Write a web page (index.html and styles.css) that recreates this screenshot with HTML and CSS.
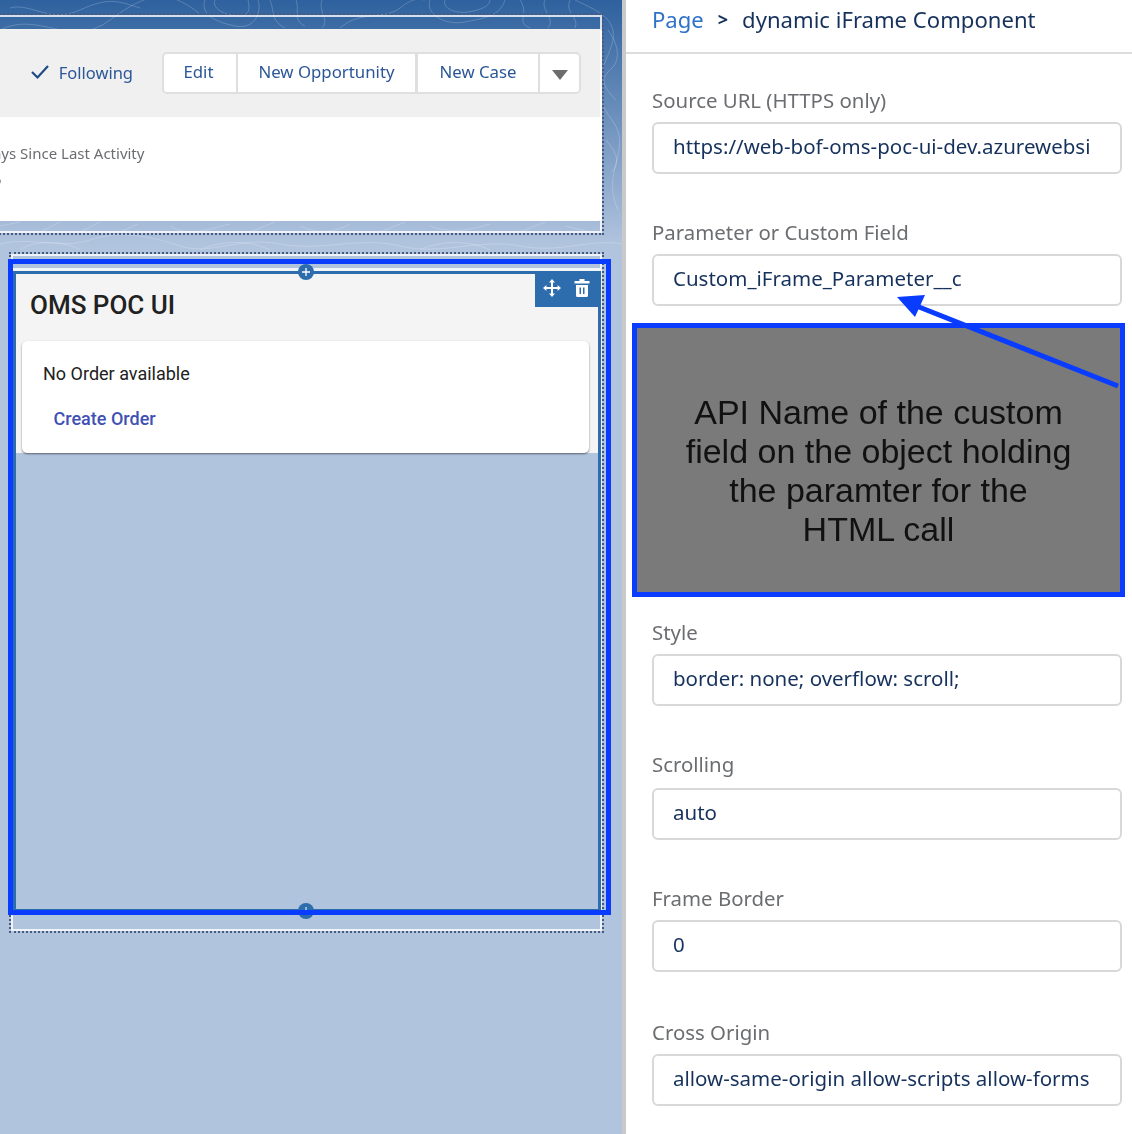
FILE: index.html
```html
<!DOCTYPE html>
<html>
<head>
  <title>dynamic iFrame Component</title>
  <link rel="stylesheet" href="styles.css">
</head>
<body>
  <div class="page">
    <div class="canvas">
      <svg class="topo" viewBox="0 0 622 250" fill="none" stroke="#fff" stroke-opacity="0.2">
        <path d="M0 30C40 10 70 50 110 20S170 -10 200 14"/>
        <path d="M10 8C30 2 50 24 80 10S120 2 140 8"/>
        <path d="M205 0C200 14 215 22 235 26S262 12 258 0"/>
        <path d="M215 0C212 8 222 14 236 16S250 8 248 0"/>
        <path d="M270 0C275 12 270 20 285 28M296 0C300 10 292 20 305 26M322 0C318 12 330 20 322 28"/>
        <path d="M340 28C360 10 385 20 400 8S420 0 425 0"/>
        <path d="M430 0C425 14 445 26 465 22S500 16 505 0"/>
        <path d="M445 0C442 8 455 14 468 12S490 6 490 0"/>
        <path d="M520 0C530 14 515 22 530 28M545 0C540 10 556 18 548 28M570 0C564 12 580 18 575 28"/>
        <path d="M575 0C600 12 622 20 610 50S590 90 612 120 600 170 618 210"/>
        <path d="M608 30C618 44 622 60 610 70S606 90 616 100"/>
        <path d="M606 140C614 150 622 160 612 172"/>
        <path d="M0 226L20 222M40 232L60 222M80 232L100 222M120 232L138 224M170 226C190 238 210 228 230 224M250 232L275 222M300 226C320 236 340 230 350 224M380 232L405 222M430 226C450 234 470 230 490 224M520 232L545 222M565 226L590 232"/>
        <path d="M0 244C30 236 60 250 90 240S150 236 180 246 240 236 280 244 360 236 400 246 480 238 520 246 590 238 622 244"/>
        <path d="M20 250C30 242 60 238 80 250M200 250C220 240 250 240 270 250M420 250C440 240 470 240 490 250"/>
      </svg>

      <div class="frame frame-top">
        <div class="record-card">
          <div class="record-head">
            <div class="following">
              <svg width="20" height="16" viewBox="0 0 20 16" fill="none" stroke="#1f4a85" stroke-width="2.2"><path d="M2 8l5.500 5.500L18 2"/></svg>
              <span>Following</span>
            </div>
            <div class="btn-group">
              <span class="btn btn-edit">Edit</span>
              <span class="btn btn-opp">New Opportunity</span>
              <span class="btn btn-case">New Case</span>
              <span class="btn btn-more"><i class="caret"></i></span>
            </div>
          </div>
          <div class="record-body">
            <div class="stat-label">Days Since Last Activity</div>
            <div class="stat-value">5</div>
          </div>
        </div>
      </div>

      <div class="frame frame-main">
        <div class="selected">
          <span class="add-dot add-top"><svg width="10" height="10" viewBox="0 0 10 10" stroke="#fff" stroke-width="1.3"><path d="M5 1v8M1 5h8"/></svg></span>
          <div class="toolbar">
            <svg width="18" height="18" viewBox="0 0 18 18" fill="#fff">
              <path d="M9 0l3 3.400h-2V8h4.600V6l3.400 3-3.400 3v-2H10v4.600h2L9 18l-3-3.400h2V10H3.400v2L0 9l3.400-3v2H8V3.400H6z"/>
            </svg>
            <svg width="16" height="18" viewBox="0 0 16 18" fill="#fff">
              <path d="M5.500 0h5v2H15.500v2.500H.5V2h5zM2 6h12v10.500a1.500 1.500 0 0 1-1.500 1.500h-9A1.500 1.500 0 0 1 2 16.500zM5.500 8.500v6.500h1.500V8.500zM9 8.500v6.500h1.500V8.500z" fill-rule="evenodd"/>
            </svg>
          </div>
          <div class="oms">
            <h2 class="oms-title">OMS POC UI</h2>
            <div class="oms-card">
              <div class="oms-text">No Order available</div>
              <a class="oms-link">Create Order</a>
            </div>
          </div>
          <span class="add-dot add-bottom"><svg width="10" height="10" viewBox="0 0 10 10" stroke="#fff" stroke-width="1"><path d="M5 1v8"/></svg></span>
        </div>
      </div>

      <div class="highlight"></div>
    </div>

    <div class="panel">
      <div class="crumbs">
        <a class="crumb-link">Page</a>
        <b class="crumb-sep">&gt;</b>
        <span>dynamic iFrame Component</span>
      </div>
      <div class="fields">
        <div class="field">
          <label>Source URL (HTTPS only)</label>
          <div class="input">https://web-bof-oms-poc-ui-dev.azurewebsi</div>
        </div>
        <div class="field">
          <label>Parameter or Custom Field</label>
          <div class="input">Custom_iFrame_Parameter__c</div>
        </div>
        <div class="note">API Name of the custom<br>field on the object holding<br>the paramter for the<br>HTML call</div>
        <div class="field">
          <label>Style</label>
          <div class="input">border: none; overflow: scroll;</div>
        </div>
        <div class="field field-wide">
          <label>Scrolling</label>
          <div class="input">auto</div>
        </div>
        <div class="field">
          <label>Frame Border</label>
          <div class="input">0</div>
        </div>
        <div class="field field-last">
          <label>Cross Origin</label>
          <div class="input">allow-same-origin allow-scripts allow-forms</div>
        </div>
      </div>
    </div>

    <svg class="arrow" width="235" height="100" viewBox="0 0 235 100">
      <path d="M228 96L24 15" stroke="#0a3cff" stroke-width="5"/>
      <path d="M7 7L35 5L25 27z" fill="#0a3cff"/>
    </svg>
  </div>
</body>
</html>
```

FILE: styles.css
```css
html, body {
  margin: 0;
  padding: 0;
}
body {
  background: #fff;
  overflow: hidden;
}
.page {
  position: relative;
  display: flex;
  width: 1132px;
  height: 1134px;
  overflow: hidden;
  filter: blur(0.35px);
  font-family: "Noto Sans", Lato, sans-serif;
}

/* left side, the page canvas */
.canvas {
  position: relative;
  width: 622px;
  height: 1134px;
  flex: none;
  overflow: hidden;
  background: linear-gradient(#2e619e 0, #b1c4de 245px, #b1c4de 100%);
}
.topo {
  position: absolute;
  top: 0;
  left: 0;
  width: 622px;
  height: 250px;
}
.frame {
  position: relative;
  box-sizing: border-box;
  border: 2px dotted #47597f;
  outline: 2px solid rgba(255, 255, 255, 0.8);
  outline-offset: -4px;
}
.frame-top {
  width: 624px;
  height: 222px;
  margin: 13px 0 0 -20px;
  padding: 14px 0 0 0;
}
.record-card {
  border-radius: 4px;
  overflow: hidden;
  background: #fff;
}
.record-head {
  display: flex;
  align-items: center;
  justify-content: flex-end;
  height: 88px;
  padding-right: 21px;
  background: #f0f0f0;
}
.following {
  display: flex;
  align-items: center;
  gap: 9px;
  margin-right: 29px;
  margin-bottom: 2px;
  font-size: 16.500px;
  color: #2b5797;
}
.btn-group {
  display: flex;
  height: 42px;
  box-sizing: border-box;
  border: 2px solid #dfdfdf;
  border-radius: 5px;
  background: #fff;
}
.btn {
  display: flex;
  align-items: center;
  justify-content: center;
  box-sizing: border-box;
  padding-bottom: 3px;
  border-right: 2px solid #dfdfdf;
  font-size: 16.800px;
  color: #2b5797;
}
.btn-edit { width: 74px; padding-right: 3px; }
.btn-opp { width: 180px; border-right-width: 3px; }
.btn-case { width: 122px; }
.btn-more { width: 39px; border-right: 0; padding-bottom: 0; }
.caret {
  width: 0;
  height: 0;
  margin-top: 3px;
  border-left: 8px solid transparent;
  border-right: 8px solid transparent;
  border-top: 10px solid #6d6d6d;
}
.record-body {
  height: 104px;
  padding-top: 26px;
  box-sizing: border-box;
  font-size: 15px;
  color: #6b6d70;
}
.stat-value {
  margin: 6px 0 0 11px;
}

.frame-main {
  width: 595px;
  height: 681px;
  margin: 17px 0 0 9px;
  padding: 17px 0 0 2px;
}
.selected {
  position: relative;
  box-sizing: border-box;
  width: 588px;
  height: 641px;
  border: 3px solid #2d6cad;
  box-shadow: 0 -3px 0 #f2f5f9;
}
.add-dot {
  position: absolute;
  left: 50%;
  display: flex;
  align-items: center;
  justify-content: center;
  width: 16px;
  height: 16px;
  margin-left: -9px;
  border-radius: 50%;
  background: #2d6cad;
}
.add-top { top: -10px; }
.add-bottom { bottom: -10px; }
.toolbar {
  position: absolute;
  top: 0;
  right: 0;
  display: flex;
  align-items: center;
  justify-content: center;
  gap: 13px;
  box-sizing: border-box;
  width: 63px;
  height: 33px;
  padding: 0 0 6px 0;
  background: #2d6cad;
}
.oms {
  height: 179px;
  padding: 0 9px 0 6px;
  background: #f4f4f4;
  font-family: Roboto, sans-serif;
}
.oms-title {
  margin: 0;
  height: 67px;
  padding: 16px 0 0 8px;
  box-sizing: border-box;
  font-size: 26px;
  font-weight: 500;
  color: #212121;
}
.oms-card {
  height: 112px;
  box-sizing: border-box;
  padding: 22px 0 0 21px;
  border-radius: 5px;
  background: #fff;
  box-shadow: 0 1px 2px rgba(0, 0, 0, 0.5);
}
.oms-text {
  font-size: 18px;
  color: #212121;
}
.oms-link {
  display: block;
  margin: 24px 0 0 10.500px;
  font-size: 18px;
  font-weight: 500;
  color: #3f51b5;
}
.highlight {
  position: absolute;
  top: 259px;
  left: 8px;
  width: 603px;
  height: 656px;
  box-sizing: border-box;
  border: 5px solid #0a3cff;
}

/* right side, the property panel */
.panel {
  flex: 1;
  box-sizing: border-box;
  border-left: 4px solid #c9c9c9;
}
.crumbs {
  display: flex;
  align-items: center;
  gap: 14px;
  box-sizing: border-box;
  height: 54px;
  padding: 0 0 14px 26px;
  border-bottom: 2px solid #dcdcdc;
  font-size: 22.100px;
  color: #16325c;
}
.crumb-link {
  color: #2f73c9;
}
.crumb-sep {
  font-size: 18px;
}
.fields {
  padding: 35px 10px 0 26px;
}
.field {
  margin-bottom: 47px;
}
.field-last {
  margin-top: 49px;
}
.field label {
  display: block;
  height: 33px;
  font-size: 20.400px;
  line-height: 22px;
  color: #6b6d70;
}
.field-wide label {
  height: 35px;
}
.input {
  box-sizing: border-box;
  height: 52px;
  padding-left: 19px;
  border: 2px solid #d8d8d8;
  border-radius: 6px;
  font-size: 20.500px;
  line-height: 45px;
  white-space: nowrap;
  overflow: hidden;
  color: #16325c;
}
.note {
  box-sizing: border-box;
  height: 274px;
  margin: -30px -3px 24px -20px;
  padding-top: 64.500px;
  border: 5px solid #0a3cff;
  background: #7a7a7a;
  font-family: "Liberation Sans", Arial, sans-serif;
  font-size: 34px;
  line-height: 39.300px;
  text-align: center;
  color: #111;
}
.arrow {
  position: absolute;
  top: 290px;
  left: 890px;
}
```
